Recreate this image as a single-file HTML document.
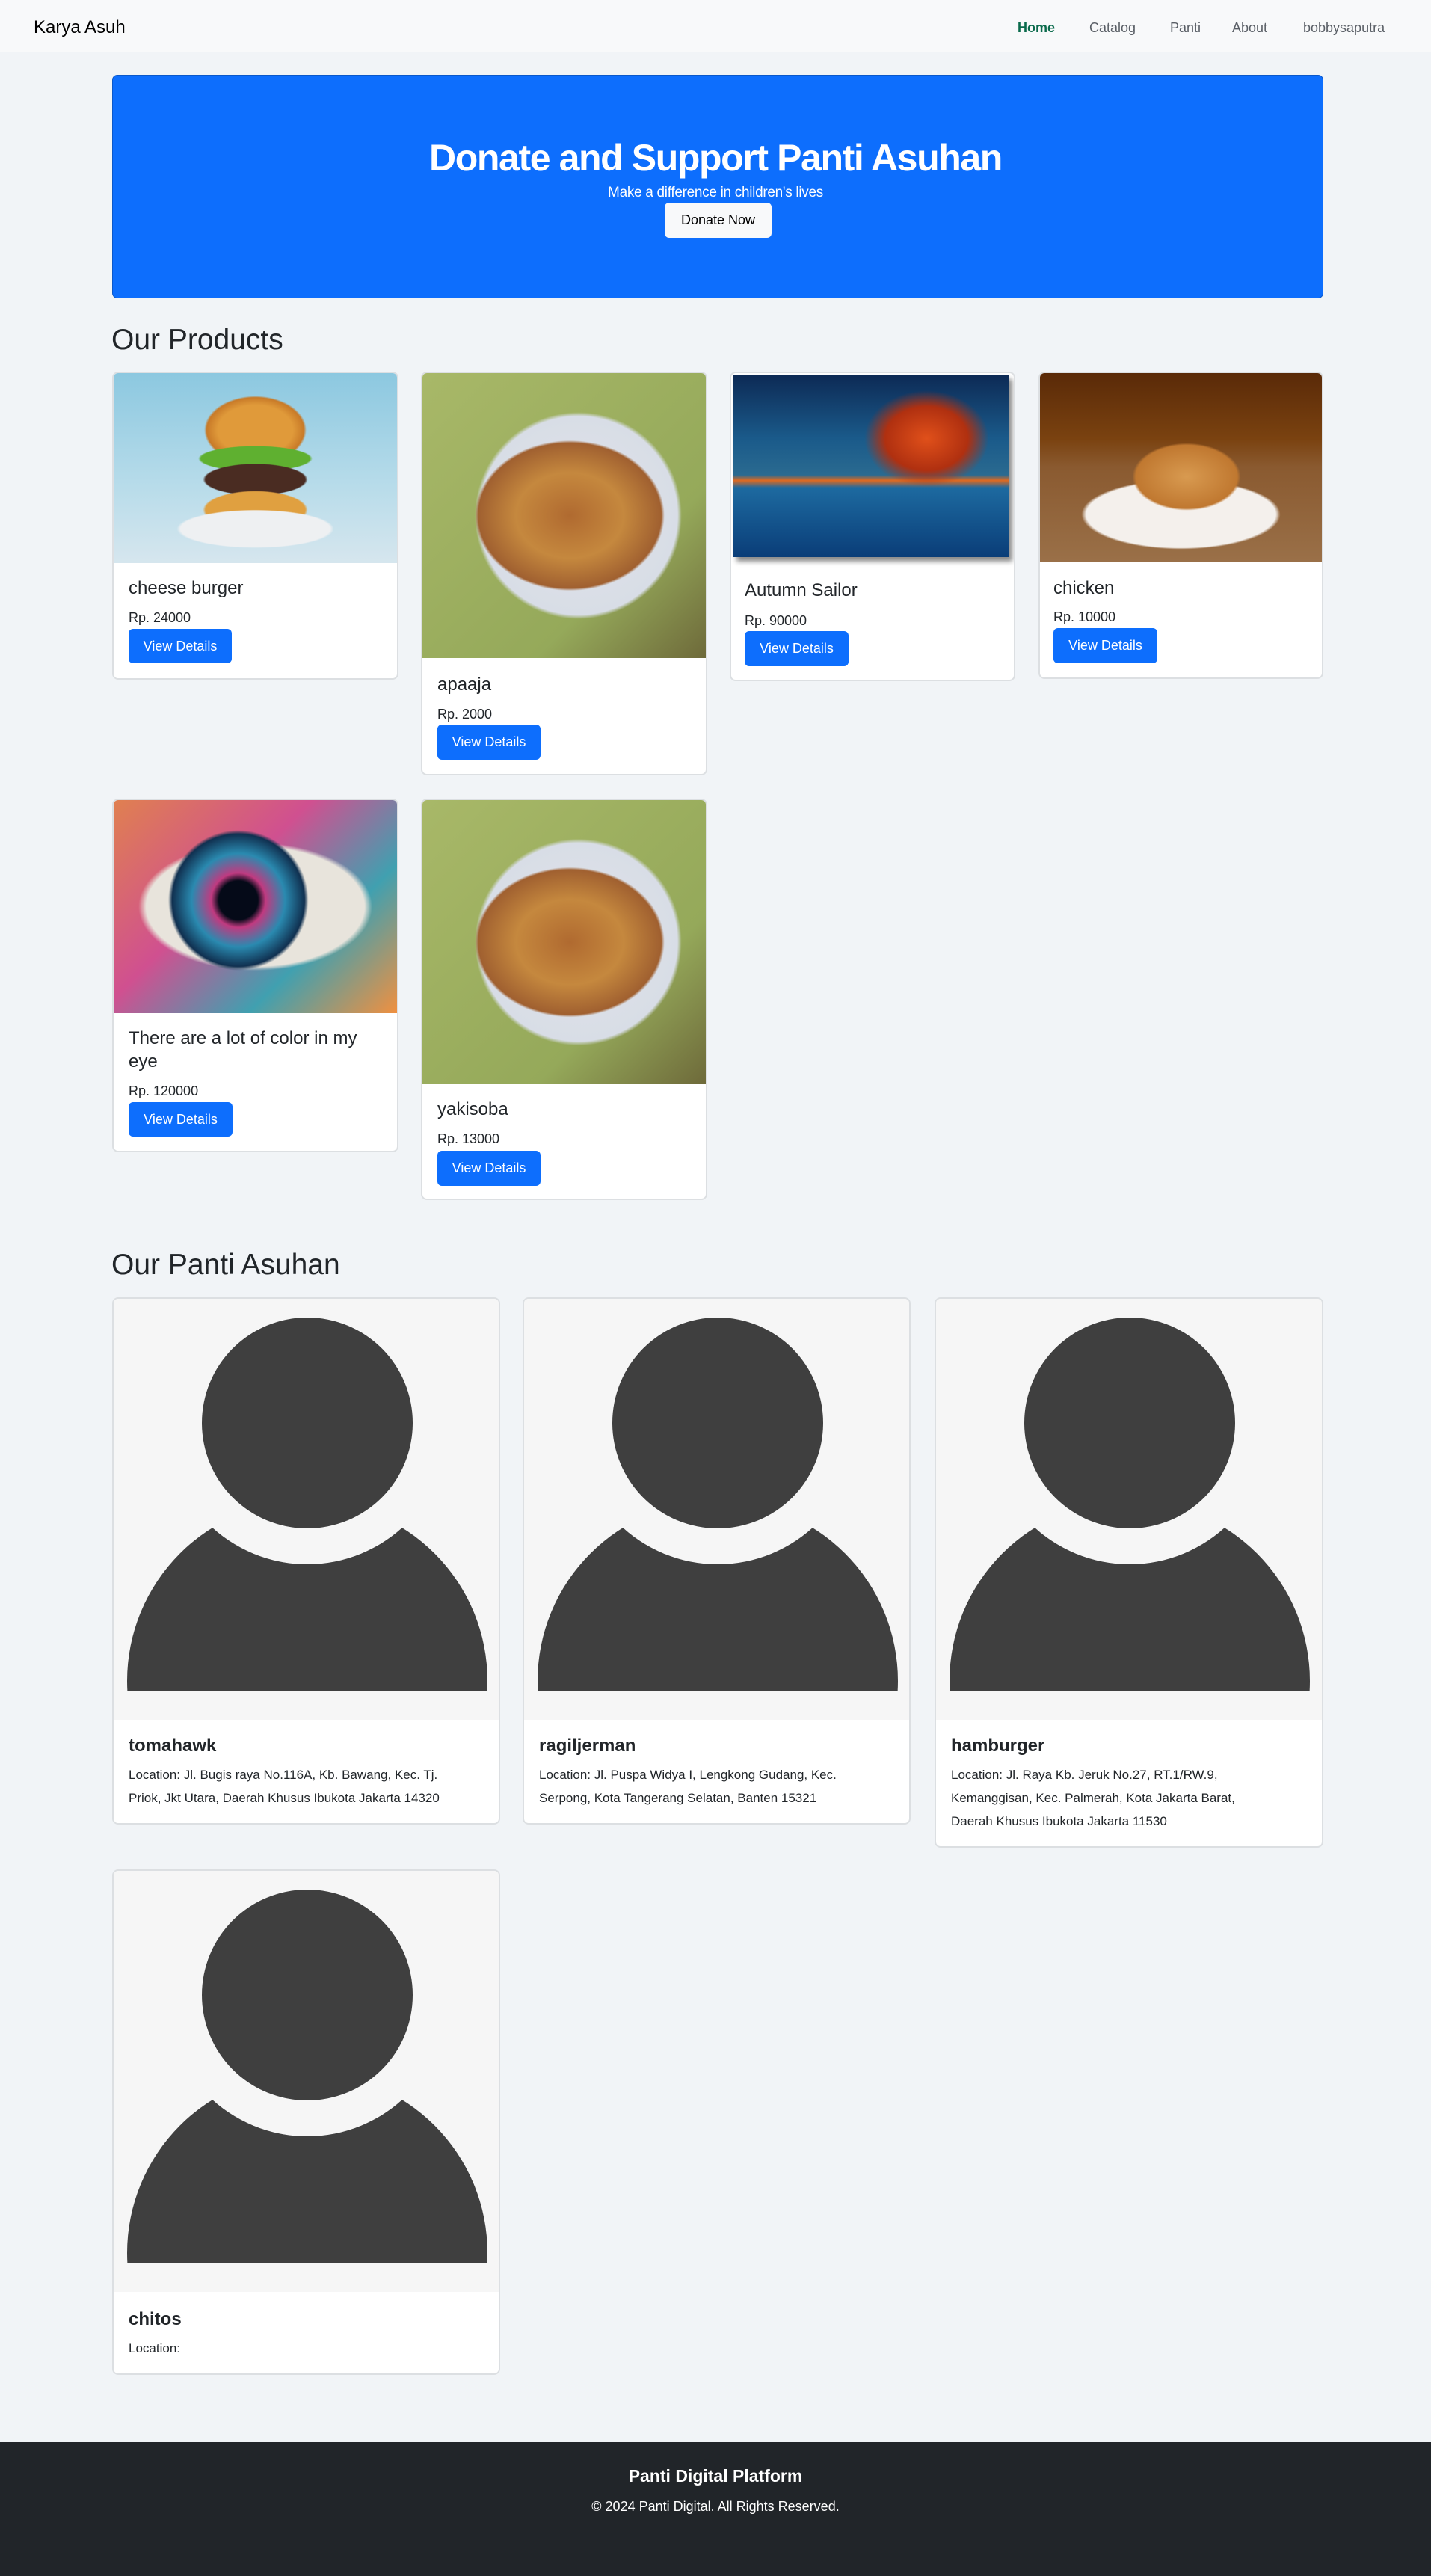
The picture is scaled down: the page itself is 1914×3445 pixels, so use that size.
<!DOCTYPE html>
<html><head><meta charset="utf-8">
<style>
*{margin:0;padding:0;box-sizing:border-box}
body{width:1914px;height:3445px;background:#f1f4f7;font-family:"Liberation Sans",Arial,sans-serif;color:#212529;position:relative;overflow:hidden}
.a{position:absolute}
.t{position:absolute;white-space:nowrap;line-height:1}
.card{position:absolute;background:#fff;border:2px solid #dcdfe2;border-radius:8px;overflow:hidden}
.img{position:absolute;left:0;top:0;width:100%}
.btn{position:absolute;background:#0d6efd;color:#fff;border-radius:6px;font-size:18px;text-align:center}
.ct{font-size:24px;color:#212529}
.pr{font-size:18px;color:#212529}
.pn{font-size:24px;font-weight:bold;color:#212529}
.loc{font-size:17px;color:#212529}
</style></head><body>
<div class="a" style="left:0;top:0;width:1914px;height:70px;background:#f8f9fa"></div>
<div class="t" style="left:45px;top:25px;font-size:24px;color:#000">Karya Asuh</div>
<div class="t" style="left:1361px;top:28px;font-size:18px;font-weight:bold;color:#0b6b4c">Home</div>
<div class="t" style="left:1457px;top:28px;font-size:18px;color:#5a5f66">Catalog</div>
<div class="t" style="left:1565px;top:28px;font-size:18px;color:#5a5f66">Panti</div>
<div class="t" style="left:1648px;top:28px;font-size:18px;color:#5a5f66">About</div>
<div class="t" style="left:1743px;top:28px;font-size:18px;color:#5a5f66">bobbysaputra</div>

<div class="a" style="left:150px;top:100px;width:1620px;height:299px;background:#0d6efd;border:1px solid #0a58ca;border-radius:7px"></div>
<div class="t" style="left:0;width:1914px;text-align:center;top:186px;font-size:50px;font-weight:bold;color:#fff;letter-spacing:-1.4px">Donate and Support Panti Asuhan</div>
<div class="t" style="left:0;width:1914px;text-align:center;top:248px;font-size:19px;color:#fff;letter-spacing:-0.3px">Make a difference in children's lives</div>
<div class="a" style="left:889px;top:271px;width:143px;height:47px;background:#f8f9fa;border-radius:6px;color:#000;font-size:18px;text-align:center;line-height:47px">Donate Now</div>

<div class="t" style="left:149px;top:435px;font-size:39px;color:#212529">Our Products</div>

<!-- card 1 -->
<div class="card" style="left:150px;top:497px;width:383px;height:412px">
 <div class="img" style="height:254px;background:radial-gradient(ellipse 33% 12% at 50% 82%,#eef0f2 80%,transparent 84%),radial-gradient(ellipse 22% 12% at 50% 72%,#e0a040 80%,transparent 84%),radial-gradient(ellipse 22% 10% at 50% 56%,#4a2c22 80%,transparent 84%),radial-gradient(ellipse 24% 8% at 50% 45%,#5fb030 80%,transparent 84%),radial-gradient(ellipse 22% 22% at 50% 30%,#e09a3a 60%,#c87a28 78%,transparent 82%),linear-gradient(180deg,#8cc8e0,#b8dcea 60%,#d6e6ee)"></div>
</div>
<div class="t ct" style="left:172px;top:775px">cheese burger</div>
<div class="t pr" style="left:172px;top:817px">Rp. 24000</div>
<div class="btn" style="left:172px;top:841px;width:138px;height:46px;line-height:46px">View Details</div>

<!-- card 2 -->
<div class="card" style="left:563px;top:497px;width:383px;height:540px">
 <div class="img" style="height:381px;background:radial-gradient(ellipse 38% 30% at 52% 50%,#b06a30 0%,#c5883e 50%,#a06030 85%,transparent 88%),radial-gradient(circle at 55% 50%,#e0e4ea 0,#d8dde6 47%,transparent 49%),linear-gradient(135deg,#a8b868,#95a95a 70%,#6e6a3a)"></div>
</div>
<div class="t ct" style="left:585px;top:904px">apaaja</div>
<div class="t pr" style="left:585px;top:946px">Rp. 2000</div>
<div class="btn" style="left:585px;top:969px;width:138px;height:47px;line-height:47px">View Details</div>

<!-- card 3 -->
<div class="card" style="left:976px;top:497px;width:382px;height:414px">
 <div class="a" style="left:3px;top:2px;width:369px;height:244px;box-shadow:4px 6px 6px rgba(0,0,0,.45);background:radial-gradient(ellipse 30% 35% at 70% 35%,#e0501a,#b03010 50%,transparent 75%),linear-gradient(180deg,#0d2a55 0%,#1a5a8a 35%,#2a6a90 55%,#e06a20 58%,#1d6aa0 62%,#0a3d78 100%)"></div>
</div>
<div class="t ct" style="left:996px;top:778px">Autumn Sailor</div>
<div class="t pr" style="left:996px;top:821px">Rp. 90000</div>
<div class="btn" style="left:996px;top:844px;width:139px;height:47px;line-height:47px">View Details</div>

<!-- card 4 -->
<div class="card" style="left:1389px;top:497px;width:381px;height:411px">
 <div class="img" style="height:252px;background:radial-gradient(ellipse 30% 28% at 52% 55%,#d89a50,#c07830 60%,transparent 64%),radial-gradient(ellipse 42% 22% at 50% 75%,#f4f0ec 80%,transparent 84%),linear-gradient(180deg,#5a2a08 0%,#7a4210 35%,#8a5a30 50%,#9a7048 100%)"></div>
</div>
<div class="t ct" style="left:1409px;top:775px">chicken</div>
<div class="t pr" style="left:1409px;top:816px">Rp. 10000</div>
<div class="btn" style="left:1409px;top:840px;width:139px;height:47px;line-height:47px">View Details</div>

<!-- row 2 card 1 -->
<div class="card" style="left:150px;top:1068px;width:383px;height:473px">
 <div class="img" style="height:285px;background:radial-gradient(circle at 44% 47%,#050a18 0,#050a18 10%,#c03a80 14%,#2a8ab0 24%,#103050 34%,transparent 36%),radial-gradient(ellipse 55% 40% at 50% 50%,#e8e4dc 70%,transparent 75%),linear-gradient(135deg,#e08050,#d05090 40%,#40a0b0 70%,#f09040)"></div>
</div>
<div class="t ct" style="left:172px;top:1377px">There are a lot of color in my</div>
<div class="t ct" style="left:172px;top:1408px">eye</div>
<div class="t pr" style="left:172px;top:1450px">Rp. 120000</div>
<div class="btn" style="left:172px;top:1474px;width:139px;height:46px;line-height:46px">View Details</div>

<!-- row 2 card 2 -->
<div class="card" style="left:563px;top:1068px;width:383px;height:537px">
 <div class="img" style="height:380px;background:radial-gradient(ellipse 38% 30% at 52% 50%,#b06a30 0%,#c5883e 50%,#a06030 85%,transparent 88%),radial-gradient(circle at 55% 50%,#e0e4ea 0,#d8dde6 47%,transparent 49%),linear-gradient(135deg,#a8b868,#95a95a 70%,#6e6a3a)"></div>
</div>
<div class="t ct" style="left:585px;top:1472px">yakisoba</div>
<div class="t pr" style="left:585px;top:1514px">Rp. 13000</div>
<div class="btn" style="left:585px;top:1539px;width:138px;height:47px;line-height:47px">View Details</div>

<div class="t" style="left:149px;top:1672px;font-size:39px;color:#212529">Our Panti Asuhan</div>

<svg width="0" height="0" style="position:absolute"><defs>
<g id="av"><rect width="518" height="563" fill="#f6f6f6"/>
<clipPath id="cl"><rect x="0" y="0" width="518" height="525"/></clipPath>
<g clip-path="url(#cl)"><circle cx="259" cy="511" r="241" fill="#3f3f3f"/><circle cx="259" cy="166" r="189" fill="#f6f6f6"/></g>
<circle cx="259" cy="166" r="141" fill="#3f3f3f"/></g></defs></svg>

<div class="card" style="left:150px;top:1735px;width:519px;height:705px"><svg class="img" width="518" height="563"><use href="#av"/></svg></div>
<div class="t pn" style="left:172px;top:2323px">tomahawk</div>
<div class="t loc" style="left:172px;top:2365px">Location: Jl. Bugis raya No.116A, Kb. Bawang, Kec. Tj.</div>
<div class="t loc" style="left:172px;top:2396px">Priok, Jkt Utara, Daerah Khusus Ibukota Jakarta 14320</div>

<div class="card" style="left:699px;top:1735px;width:519px;height:705px"><svg class="img" width="518" height="563"><use href="#av"/></svg></div>
<div class="t pn" style="left:721px;top:2323px">ragiljerman</div>
<div class="t loc" style="left:721px;top:2365px">Location: Jl. Puspa Widya I, Lengkong Gudang, Kec.</div>
<div class="t loc" style="left:721px;top:2396px">Serpong, Kota Tangerang Selatan, Banten 15321</div>

<div class="card" style="left:1250px;top:1735px;width:520px;height:736px"><svg class="img" width="518" height="563"><use href="#av"/></svg></div>
<div class="t pn" style="left:1272px;top:2323px">hamburger</div>
<div class="t loc" style="left:1272px;top:2365px">Location: Jl. Raya Kb. Jeruk No.27, RT.1/RW.9,</div>
<div class="t loc" style="left:1272px;top:2396px">Kemanggisan, Kec. Palmerah, Kota Jakarta Barat,</div>
<div class="t loc" style="left:1272px;top:2427px">Daerah Khusus Ibukota Jakarta 11530</div>

<div class="card" style="left:150px;top:2500px;width:519px;height:676px"><svg class="img" width="518" height="565"><use href="#av"/></svg></div>
<div class="t pn" style="left:172px;top:3090px">chitos</div>
<div class="t loc" style="left:172px;top:3132px">Location:</div>

<div class="a" style="left:0;top:3266px;width:1914px;height:179px;background:#212529"></div>
<div class="t" style="left:0;width:1914px;text-align:center;top:3300px;font-size:23px;font-weight:bold;color:#fff">Panti Digital Platform</div>
<div class="t" style="left:0;width:1914px;text-align:center;top:3343px;font-size:18px;color:#fff">© 2024 Panti Digital. All Rights Reserved.</div>
</body></html>
